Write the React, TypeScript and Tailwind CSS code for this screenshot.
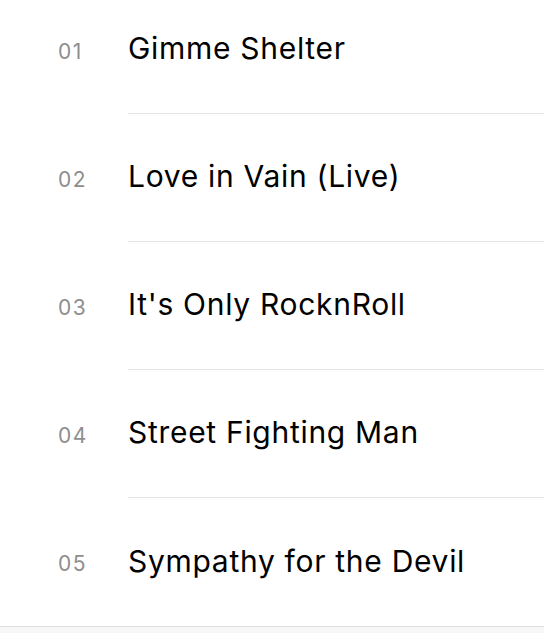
import React from 'react';

const tracks = [
  { no: '01', title: 'Gimme Shelter' },
  { no: '02', title: 'Love in Vain (Live)' },
  { no: '03', title: "It's Only RocknRoll" },
  { no: '04', title: 'Street Fighting Man' },
  { no: '05', title: 'Sympathy for the Devil' },
];

export default function App() {
  return (
    <div className="h-[633px] w-[544px] overflow-hidden bg-white flex flex-col" style={{ fontFamily: 'Inter, "Liberation Sans", sans-serif' }}>
      <ul className="-mt-[14px] shrink-0">
        {tracks.map((t, i) => (
          <li key={t.no} className="flex h-[128px]">
            <div className="w-[128px] shrink-0 flex items-center pl-[58px] pt-[4px] text-[21px] tracking-[1.5px] text-[#8e8e8e]">
              {t.no}
            </div>
            <div
              className={
                'flex-1 flex items-center pb-[2px] text-[30px] text-black tracking-[0.7px] ' +
                (i < tracks.length - 1 ? 'border-b border-[#e5e5e5]' : '')
              }
            >
              {t.title}
            </div>
          </li>
        ))}
      </ul>
      <div className="flex-1 border-t border-[#dedede] bg-[#f7f7f7]" />
    </div>
  );
}
